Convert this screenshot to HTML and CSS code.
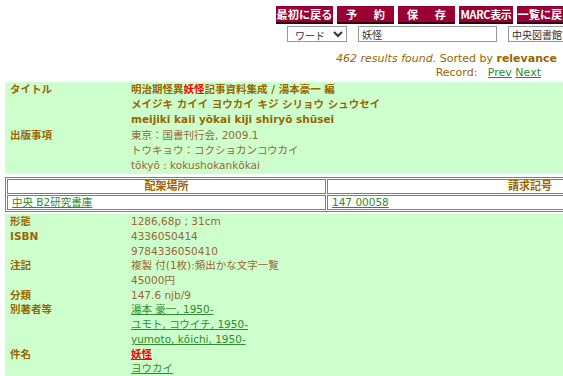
FILE: index.html
```html
<!DOCTYPE html>
<html lang="ja">
<head>
    <meta charset="UTF-8">
    <title>詳細表示</title>
    <link rel="stylesheet" href="styles.css">
</head>
<body>
    <div class="page">
        <div class="toolbar">
            <a class="btn" href="#">最初に戻る</a>
            <a class="btn spaced" href="#">予 約</a>
            <a class="btn spaced" href="#">保 存</a>
            <a class="btn marc" href="#">MARC表示</a>
            <a class="btn" href="#">一覧に戻る</a>
        </div>
        <form class="search">
            <select class="field-select">
                <option>ワード</option>
            </select>
            <input class="field-word" type="text" value="妖怪">
            <input class="field-lib" type="text" value="中央図書館">
        </form>
        <div class="status"><i>462 results found.</i> Sorted by <b>relevance</b></div>
        <div class="record-nav">Record:&nbsp;&nbsp; <a href="#">Prev</a> <a href="#">Next</a></div>

        <div class="record upper">
            <div class="label">タイトル</div>
            <div class="value strong">明治期怪異<span class="hit">妖怪</span>記事資料集成 / 湯本豪一 編</div>
            <div class="label"></div>
            <div class="value strong">メイジキ カイイ ヨウカイ キジ シリョウ シュウセイ</div>
            <div class="label"></div>
            <div class="value strong">meijiki kaii yōkai kiji shiryō shūsei</div>
            <div class="label">出版事項</div>
            <div class="value">東京：国書刊行会, 2009.1</div>
            <div class="label"></div>
            <div class="value">トウキョウ：コクショカンコウカイ</div>
            <div class="label"></div>
            <div class="value">tōkyō : kokushokankōkai</div>
        </div>

        <table class="holdings">
            <tr>
                <th class="col-place">配架場所</th>
                <th>請求記号</th>
            </tr>
            <tr>
                <td><a href="#">中央 B2研究書庫</a></td>
                <td><a href="#">147 00058</a></td>
            </tr>
        </table>

        <div class="record lower">
            <div class="label">形態</div>
            <div class="value">1286,68p ; 31cm</div>
            <div class="label">ISBN</div>
            <div class="value">4336050414</div>
            <div class="label"></div>
            <div class="value">9784336050410</div>
            <div class="label">注記</div>
            <div class="value">複製 付(1枚):頻出かな文字一覧</div>
            <div class="label"></div>
            <div class="value">45000円</div>
            <div class="label">分類</div>
            <div class="value">147.6 njb/9</div>
            <div class="label">別著者等</div>
            <div class="value"><a href="#">湯本 豪一, 1950-</a></div>
            <div class="label"></div>
            <div class="value"><a href="#">ユモト, コウイチ, 1950-</a></div>
            <div class="label"></div>
            <div class="value"><a href="#">yumoto, kōichi, 1950-</a></div>
            <div class="label">件名</div>
            <div class="value"><a class="hit-link" href="#">妖怪</a></div>
            <div class="label"></div>
            <div class="value"><a href="#">ヨウカイ</a></div>
        </div>
    </div>
</body>
</html>
```

FILE: styles.css
```css
/* Basic styling */
html, body {
    margin: 0;
    overflow: hidden;
}
body {
    font-family: "DejaVu Sans", "Noto Sans CJK JP", sans-serif;
    font-size: 10.5px;
    color: #996633;
    background: #ffffff;
}
.page {
    width: 563px;
}
a {
    color: #2e8b2e;
}

/* buttons */
.toolbar {
    display: flex;
    gap: 4px;
    padding: 6px 0 0 276px;
}
.btn {
    flex-shrink: 0;
    width: 57px;
    height: 16px;
    line-height: 16px;
    background: #990033;
    border-bottom: 2px solid #330011;
    color: #ffffff;
    font-family: "Noto Sans CJK JP", sans-serif;
    font-weight: bold;
    font-size: 11.2px;
    text-align: center;
    text-decoration: none;
    overflow: hidden;
    white-space: nowrap;
}
.btn.spaced {
    word-spacing: 14px;
}
.btn.marc {
    width: 54px;
    font-size: 11px;
    letter-spacing: -0.4px;
}

/* search row */
.search {
    display: flex;
    gap: 11px;
    margin: 2px 0 0 287px;
}
.search select,
.search input {
    box-sizing: border-box;
    height: 16px;
    padding: 0 3px;
    border: 1px solid #999999;
    font-family: "Noto Sans CJK JP", sans-serif;
    font-size: 10px;
    color: #333333;
    background: #ffffff;
    flex-shrink: 0;
}
.field-select {
    width: 60px;
    padding: 0;
    text-align: left;
}
.field-word {
    width: 139px;
}
.field-lib {
    width: 70px;
}

/* status */
.status {
    text-align: right;
    padding: 10px 6px 0 0;
    color: #996600;
    font-size: 11px;
    line-height: 14px;
}
.record-nav {
    text-align: right;
    padding-right: 22px;
    color: #996600;
    font-size: 11px;
    line-height: 14px;
}

/* record fields */
.record {
    display: grid;
    grid-template-columns: 121px 1fr;
    margin-left: 5px;
    padding-left: 5px;
    background: #ccffcc;
    white-space: nowrap;
}
.record.upper {
    margin-top: 2px;
    line-height: 15.2px;
    padding-bottom: 1px;
}
.record.lower {
    margin-top: 2px;
    line-height: 14.7px;
}
.label {
    font-weight: bold;
    color: #996600;
}
.value.strong {
    font-weight: bold;
    color: #996600;
}
.hit,
.hit-link {
    color: #ff0000;
    font-weight: bold;
}

/* holdings table */
.holdings {
    width: 730px;
    margin: 3px 0 0 5px;
    border: 1px solid #a07840;
    border-spacing: 1px;
    background: #ffffff;
}
.holdings th,
.holdings td {
    border: 1px solid #a07840;
    padding: 0 4px;
    height: 13px;
    line-height: 13px;
    white-space: nowrap;
}
.holdings th {
    color: #996600;
    font-weight: bold;
    font-size: 11px;
}
.col-place {
    width: 309px;
}
```
